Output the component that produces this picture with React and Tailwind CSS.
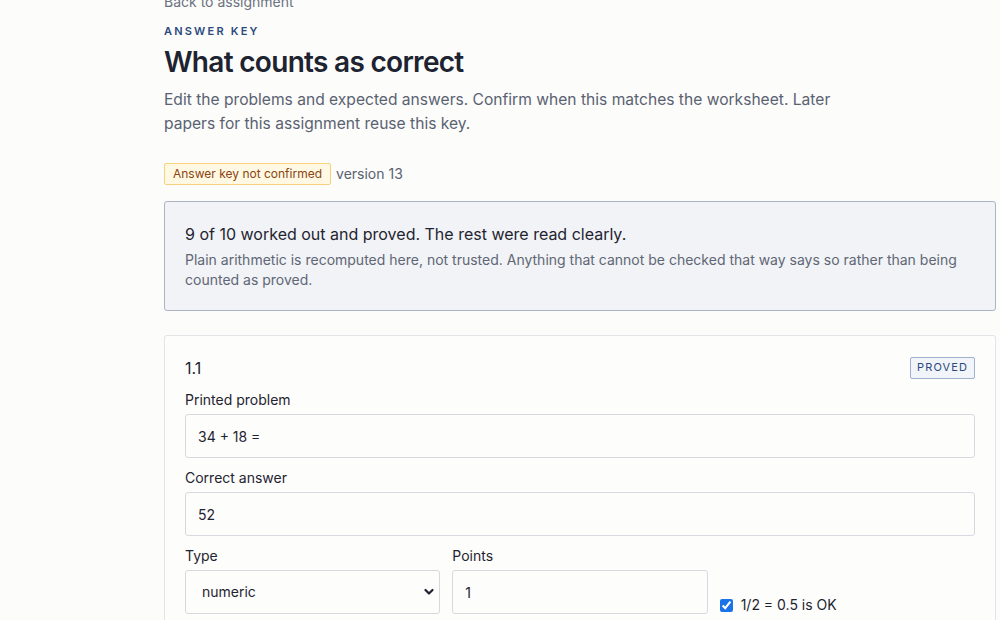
import React, { useState } from 'react';

const Field = ({ label, value, className = '' }) => (
    <div className={className}>
        <div className="text-sm leading-5 text-[#1f2430] mb-1">{label}</div>
        <input
            defaultValue={value}
            className="w-full h-[44px] px-3 text-sm text-[#1f2430] bg-[#fdfdfc] border border-[#d6d9df] rounded-[3px] outline-none"
        />
    </div>
);

const AnswerKey = () => {
    const [type, setType] = useState('numeric');

    return (
        <div className="min-h-screen bg-[#fcfcfa] font-['Inter',sans-serif] pl-[164px] pr-[4px] pb-10">
            <div className="w-[832px]">
                <a className="block -mt-[8px] text-sm leading-5 text-[#6b7280]">Back to assignment</a>
                <div className="mt-[11px] text-[11px] leading-4 font-semibold tracking-[0.2em] text-[#2b4a7e]">ANSWER KEY</div>
                <h1 className="mt-[5px] text-[28px] leading-9 font-semibold tracking-[-0.025em] text-[#1d2330]">What counts as correct</h1>
                <p className="mt-2 max-w-[690px] text-[15.6px] leading-6 text-[#5a6272]">
                    Edit the problems and expected answers. Confirm when this matches the worksheet. Later papers for this assignment reuse this key.
                </p>

                <div className="mt-[27px] flex items-center gap-[5px]">
                    <span className="px-2 h-[22px] flex items-center text-xs text-[#8a4510] bg-[#fff8e3] border border-[#f6d27f] rounded-[2px]">
                        Answer key not confirmed
                    </span>
                    <span className="text-sm text-[#5a6272]">version 13</span>
                </div>

                {/* Summary */}
                <div className="mt-4 bg-[#f1f3f6] border border-[#aab4c5] rounded-[3px] px-5 pt-5 pb-5">
                    <div className="text-base leading-6 text-[#1f2430]">9 of 10 worked out and proved. The rest were read clearly.</div>
                    <p className="mt-1 text-sm leading-5 text-[#5f6675]">
                        Plain arithmetic is recomputed here, not trusted. Anything that cannot be checked that way says so rather than being counted as proved.
                    </p>
                </div>

                {/* Problem card */}
                <div className="mt-6 bg-[#fdfdfc] border border-[#e2e4e8] rounded-[3px] px-5 pt-5 pb-5">
                    <div className="flex items-center justify-between h-[23px]">
                        <span className="text-base text-[#1f2430]">1.1</span>
                        <span className="h-[22px] px-[6px] flex items-center text-[11px] tracking-[0.1em] text-[#2b4a7e] bg-[#f1f4f8] border border-[#9eb0cc] rounded-[2px]">
                            PROVED
                        </span>
                    </div>

                    <Field label="Printed problem" value="34 + 18 =" className="mt-[11px]" />
                    <Field label="Correct answer" value="52" className="mt-[10px]" />

                    <div className="mt-[10px] grid grid-cols-3 gap-3 items-end">
                        <div>
                            <div className="text-sm leading-5 text-[#1f2430] mb-1">Type</div>
                            <div className="relative">
                                <select
                                    value={type}
                                    onChange={(e) => setType(e.target.value)}
                                    className="appearance-none w-full h-[44px] pl-4 pr-8 text-sm text-[#1f2430] bg-[#fdfdfc] border border-[#d6d9df] rounded-[3px] outline-none"
                                >
                                    <option value="numeric">numeric</option>
                                    <option value="text">text</option>
                                </select>
                                <svg className="absolute right-[6px] top-[18px] w-[10px] h-[8px] text-[#1f2430]" viewBox="0 0 10 8" fill="none" stroke="currentColor" strokeWidth="2.2" strokeLinecap="round" strokeLinejoin="round">
                                    <path d="M1.5 2l3.5 3.5L8.5 2" />
                                </svg>
                            </div>
                        </div>
                        <Field label="Points" value="1" />
                        <label className="flex items-center gap-2 leading-5 -mb-px text-sm text-[#1f2430]">
                            <input type="checkbox" defaultChecked className="w-[13px] h-[13px] accent-[#1a73e8]" />
                            1/2 = 0.5 is OK
                        </label>
                    </div>

                    <Field label="Accepted variants" value="" className="mt-[9px]" />
                </div>
            </div>
        </div>
    );
};

export default AnswerKey;
